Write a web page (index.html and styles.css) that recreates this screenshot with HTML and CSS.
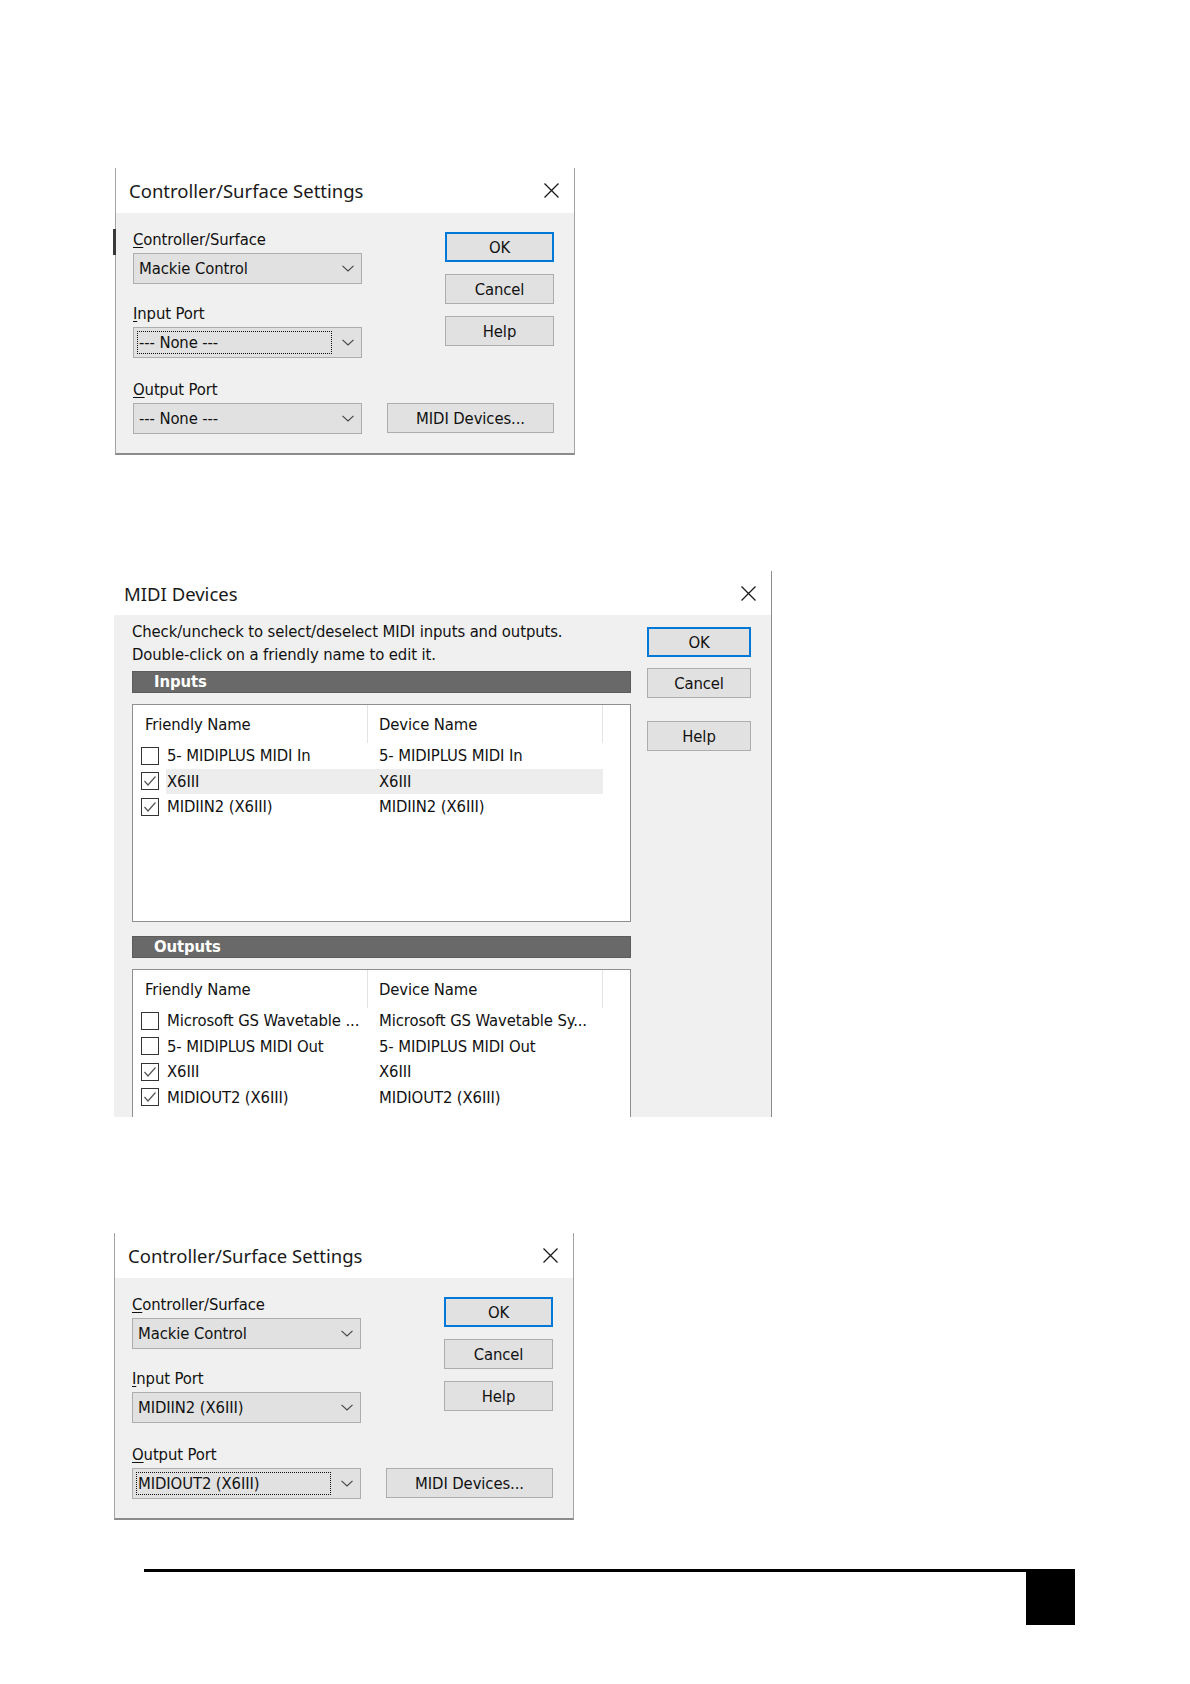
FILE: index.html
```html
<!DOCTYPE html>
<html lang="en">
<head>
  <meta charset="UTF-8">
  <title>Controller/Surface Settings - MIDI Devices</title>
  <link rel="stylesheet" href="styles.css">
</head>
<body>

  <div class="dialogs">

    <!-- Primer cuadro: sin puerto asignado -->
    <section class="dlg dlg-settings dlg-first">
      <div class="dlg-title">
        <span>Controller/Surface Settings</span>
        <svg class="close-ico" width="15" height="15" viewBox="0 0 15 15"><path d="M0.5 0.5L14.5 14.5M14.5 0.5L0.5 14.5" stroke="#1a1a1a" stroke-width="1.3" fill="none"/></svg>
      </div>
      <div class="settings-body">
        <div class="fields">
          <div class="field">
            <div class="fld-label"><u>C</u>ontroller/Surface</div>
            <div class="combo">
              <span class="combo-text">Mackie Control</span>
              <svg class="chev" width="12" height="7" viewBox="0 0 12 7"><path d="M0.5 0.8L6 6L11.5 0.8" stroke="#444" stroke-width="1.1" fill="none"/></svg>
            </div>
          </div>
          <div class="field field-2">
            <div class="fld-label"><u>I</u>nput Port</div>
            <div class="combo">
              <span class="combo-text focused">--- None ---</span>
              <svg class="chev" width="12" height="7" viewBox="0 0 12 7"><path d="M0.5 0.8L6 6L11.5 0.8" stroke="#444" stroke-width="1.1" fill="none"/></svg>
            </div>
          </div>
          <div class="field field-3">
            <div class="fld-label"><u>O</u>utput Port</div>
            <div class="combo">
              <span class="combo-text">--- None ---</span>
              <svg class="chev" width="12" height="7" viewBox="0 0 12 7"><path d="M0.5 0.8L6 6L11.5 0.8" stroke="#444" stroke-width="1.1" fill="none"/></svg>
            </div>
          </div>
        </div>
        <div class="side">
          <div class="btn-stack">
            <button class="btn btn-ok">OK</button>
            <button class="btn">Cancel</button>
            <button class="btn">Help</button>
          </div>
          <button class="btn btn-wide">MIDI Devices...</button>
        </div>
      </div>
    </section>

    <!-- Lista de dispositivos MIDI -->
    <section class="dlg dlg-devices">
      <div class="dlg-title devices-title">
        <span>MIDI Devices</span>
        <svg class="close-ico" width="15" height="15" viewBox="0 0 15 15"><path d="M0.5 0.5L14.5 14.5M14.5 0.5L0.5 14.5" stroke="#1a1a1a" stroke-width="1.3" fill="none"/></svg>
      </div>
      <div class="devices-body">
        <div class="devices-main">
          <p class="hint">Check/uncheck to select/deselect MIDI inputs and outputs.<br>Double-click on a friendly name to edit it.</p>

          <div class="group-bar">Inputs</div>
          <div class="list list-inputs">
            <div class="list-head">
              <div class="head-cell head-name">Friendly Name</div>
              <div class="head-cell head-dev">Device Name</div>
            </div>
            <div class="row">
              <div class="chk-cell"><span class="chk"></span></div>
              <div class="cells"><span class="c-name">5- MIDIPLUS MIDI In</span><span class="c-dev">5- MIDIPLUS MIDI In</span></div>
            </div>
            <div class="row">
              <div class="chk-cell"><span class="chk"><svg width="16" height="16" viewBox="0 0 16 16"><path d="M2.5 8L6 12L13.5 3.5" stroke="#555" stroke-width="1.2" fill="none"/></svg></span></div>
              <div class="cells selected"><span class="c-name">X6III</span><span class="c-dev">X6III</span></div>
            </div>
            <div class="row">
              <div class="chk-cell"><span class="chk"><svg width="16" height="16" viewBox="0 0 16 16"><path d="M2.5 8L6 12L13.5 3.5" stroke="#555" stroke-width="1.2" fill="none"/></svg></span></div>
              <div class="cells"><span class="c-name">MIDIIN2 (X6III)</span><span class="c-dev">MIDIIN2 (X6III)</span></div>
            </div>
          </div>

          <div class="group-bar group-out">Outputs</div>
          <div class="list list-outputs">
            <div class="list-head">
              <div class="head-cell head-name">Friendly Name</div>
              <div class="head-cell head-dev">Device Name</div>
            </div>
            <div class="row">
              <div class="chk-cell"><span class="chk"></span></div>
              <div class="cells"><span class="c-name">Microsoft GS Wavetable ...</span><span class="c-dev">Microsoft GS Wavetable Sy...</span></div>
            </div>
            <div class="row">
              <div class="chk-cell"><span class="chk"></span></div>
              <div class="cells"><span class="c-name">5- MIDIPLUS MIDI Out</span><span class="c-dev">5- MIDIPLUS MIDI Out</span></div>
            </div>
            <div class="row">
              <div class="chk-cell"><span class="chk"><svg width="16" height="16" viewBox="0 0 16 16"><path d="M2.5 8L6 12L13.5 3.5" stroke="#555" stroke-width="1.2" fill="none"/></svg></span></div>
              <div class="cells"><span class="c-name">X6III</span><span class="c-dev">X6III</span></div>
            </div>
            <div class="row">
              <div class="chk-cell"><span class="chk"><svg width="16" height="16" viewBox="0 0 16 16"><path d="M2.5 8L6 12L13.5 3.5" stroke="#555" stroke-width="1.2" fill="none"/></svg></span></div>
              <div class="cells"><span class="c-name">MIDIOUT2 (X6III)</span><span class="c-dev">MIDIOUT2 (X6III)</span></div>
            </div>
          </div>
        </div>

        <div class="devices-side">
          <button class="btn btn-ok">OK</button>
          <button class="btn">Cancel</button>
          <button class="btn btn-help">Help</button>
        </div>
      </div>
    </section>

    <!-- Segundo cuadro: puertos X6III asignados -->
    <section class="dlg dlg-settings dlg-last">
      <div class="dlg-title">
        <span>Controller/Surface Settings</span>
        <svg class="close-ico" width="15" height="15" viewBox="0 0 15 15"><path d="M0.5 0.5L14.5 14.5M14.5 0.5L0.5 14.5" stroke="#1a1a1a" stroke-width="1.3" fill="none"/></svg>
      </div>
      <div class="settings-body">
        <div class="fields">
          <div class="field">
            <div class="fld-label"><u>C</u>ontroller/Surface</div>
            <div class="combo">
              <span class="combo-text">Mackie Control</span>
              <svg class="chev" width="12" height="7" viewBox="0 0 12 7"><path d="M0.5 0.8L6 6L11.5 0.8" stroke="#444" stroke-width="1.1" fill="none"/></svg>
            </div>
          </div>
          <div class="field field-2">
            <div class="fld-label"><u>I</u>nput Port</div>
            <div class="combo">
              <span class="combo-text">MIDIIN2 (X6III)</span>
              <svg class="chev" width="12" height="7" viewBox="0 0 12 7"><path d="M0.5 0.8L6 6L11.5 0.8" stroke="#444" stroke-width="1.1" fill="none"/></svg>
            </div>
          </div>
          <div class="field field-3">
            <div class="fld-label"><u>O</u>utput Port</div>
            <div class="combo">
              <span class="combo-text focused">MIDIOUT2 (X6III)</span>
              <svg class="chev" width="12" height="7" viewBox="0 0 12 7"><path d="M0.5 0.8L6 6L11.5 0.8" stroke="#444" stroke-width="1.1" fill="none"/></svg>
            </div>
          </div>
        </div>
        <div class="side">
          <div class="btn-stack">
            <button class="btn btn-ok">OK</button>
            <button class="btn">Cancel</button>
            <button class="btn">Help</button>
          </div>
          <button class="btn btn-wide">MIDI Devices...</button>
        </div>
      </div>
    </section>

  </div>

  <footer class="page-foot">
    <div class="foot-box"></div>
  </footer>

</body>
</html>
```

FILE: styles.css
```css
:root {
  --dlg-bg: #f0f0f0;
  --ctl-bg: #e1e1e1;
  --ctl-border: #adadad;
  --accent: #0078d7;
  --bar-bg: #696969;
  --text: #111;
}

body {
  margin: 0;
  background: #fff;
  color: var(--text);
  font-family: "Liberation Sans Narrow", "DejaVu Sans Condensed", "Liberation Sans", sans-serif;
  font-size: 16.5px;
  letter-spacing: -0.1px;
}

.dialogs {
  display: flex;
  flex-direction: column;
  gap: 116px;
  padding-top: 168px;
}

.dlg {
  background: var(--dlg-bg);
  box-sizing: border-box;
}

.dlg-title {
  height: 45px;
  background: #fff;
  display: flex;
  align-items: center;
  justify-content: space-between;
  padding: 0 15px 0 13px;
  font-family: "Noto Sans", "Open Sans", sans-serif;
  font-size: 18.5px;
  letter-spacing: 0;
  color: #1a1a1a;
}

.close-ico {
  display: block;
}

/* Controller/Surface Settings */
.dlg-settings {
  position: relative;
  width: 460px;
  border-left: 1px solid #a3a3a3;
  border-right: 1px solid #a3a3a3;
  border-bottom: 2px solid #8c8c8c;
}

.dlg-first {
  margin-left: 115px;
}

.dlg-last {
  margin-left: 114px;
}

/* resto de la ventana de atras */
.dlg-first::before {
  content: "";
  position: absolute;
  left: -3px;
  top: 61px;
  width: 3px;
  height: 26px;
  background: #3a3a3a;
}

.settings-body {
  display: flex;
  padding: 16px 20px 19px 17px;
}

.fields {
  width: 229px;
  display: flex;
  flex-direction: column;
}

.field-2 {
  margin-top: 19px;
}

.field-3 {
  margin-top: 21px;
}

.fld-label {
  height: 22px;
  line-height: 22px;
  margin-bottom: 2px;
}

.fld-label u {
  text-underline-offset: 2px;
}

.combo {
  height: 31px;
  box-sizing: border-box;
  background: var(--ctl-bg);
  border: 1px solid var(--ctl-border);
  display: flex;
  align-items: center;
  padding: 3px 7px 3px 3px;
}

.combo-text {
  flex: 1;
  align-self: stretch;
  display: flex;
  align-items: center;
  padding-left: 1px;
  margin-right: 10px;
  border: 1px dotted transparent;
  white-space: nowrap;
}

.combo-text.focused {
  border-color: #111;
}

.chev {
  flex: none;
}

.side {
  flex: 1;
  margin-left: 25px;
  display: flex;
  flex-direction: column;
  align-items: flex-end;
  justify-content: space-between;
}

.btn-stack {
  display: flex;
  flex-direction: column;
  gap: 12px;
  margin-top: 3px;
}

.btn {
  width: 109px;
  height: 30px;
  box-sizing: border-box;
  background: var(--ctl-bg);
  border: 1px solid var(--ctl-border);
  border-radius: 0;
  font: inherit;
  letter-spacing: inherit;
  color: var(--text);
  padding: 0;
}

.btn-ok {
  border: 2px solid var(--accent);
}

.btn-wide {
  width: 167px;
  margin-bottom: 1px;
}

/* MIDI Devices */
.dlg-devices {
  width: 658px;
  margin-left: 114px;
  border-right: 1px solid #8c8c8c;
}

.devices-title {
  height: 44px;
  padding-left: 10px;
}

.devices-body {
  height: 502px;
  box-sizing: border-box;
  overflow: hidden;
  display: flex;
  padding: 6px 20px 0 18px;
}

.devices-main {
  width: 499px;
}

.hint {
  margin: 0;
  line-height: 22.5px;
}

.group-bar {
  height: 22px;
  line-height: 20px;
  box-sizing: border-box;
  margin-top: 5px;
  background: var(--bar-bg);
  border: 1px solid #5c5c5c;
  color: #fff;
  font-weight: bold;
  padding-left: 21px;
  font-size: 16.5px;
}

.group-out {
  margin-top: 14px;
}

.list {
  margin-top: 11px;
  background: #fff;
  border: 1px solid #8f8f8f;
  box-sizing: border-box;
  height: 218px;
}

.list-outputs {
  margin-top: 11px;
  height: 240px;
}

.list-head {
  display: flex;
  height: 38px;
}

.head-cell {
  display: flex;
  align-items: center;
  box-sizing: border-box;
  border-right: 1px solid #e3e3e3;
}

.head-name {
  width: 235px;
  padding-left: 12px;
}

.head-dev {
  width: 235px;
  padding-left: 11px;
}

.row {
  display: flex;
  height: 25.5px;
}

.chk-cell {
  width: 33px;
  display: flex;
  align-items: center;
  padding-left: 8px;
  box-sizing: border-box;
}

.chk {
  width: 18px;
  height: 18px;
  box-sizing: border-box;
  border: 1px solid #333;
  background: #fff;
  display: flex;
  align-items: center;
  justify-content: center;
}

.chk svg {
  display: block;
}

.cells {
  display: grid;
  grid-template-columns: 202px 235px;
  align-items: center;
  white-space: nowrap;
}

.cells.selected {
  background: #ededed;
}

.c-name {
  padding-left: 1px;
}

.c-dev {
  padding-left: 11px;
}

.devices-side {
  margin-left: 16px;
  margin-top: 6px;
  display: flex;
  flex-direction: column;
  gap: 11px;
}

.devices-side .btn {
  width: 104px;
}

.devices-side .btn-help {
  margin-top: 12px;
}

/* Pie de pagina */
.page-foot {
  margin: 49px 0 0 144px;
  width: 931px;
  border-top: 3px solid #000;
  display: flex;
  justify-content: flex-end;
}

.foot-box {
  width: 49px;
  height: 53px;
  background: #000;
}
```
